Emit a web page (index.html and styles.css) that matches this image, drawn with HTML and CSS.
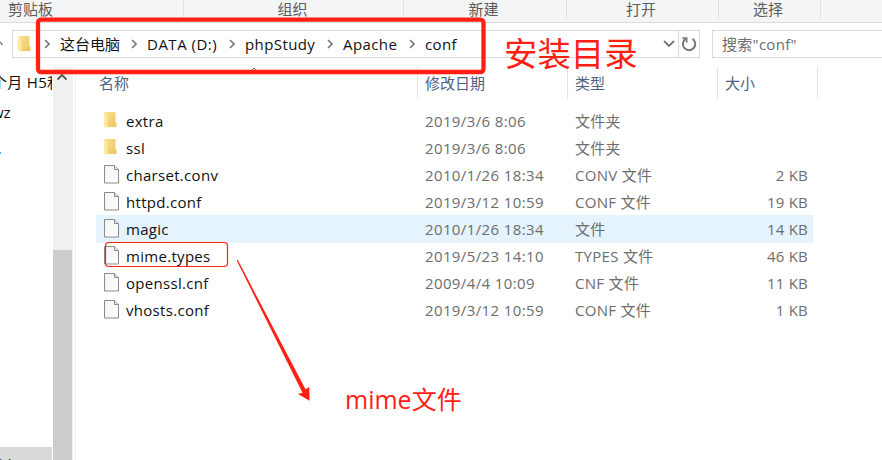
FILE: index.html
```html
<!DOCTYPE html>
<html lang="zh-CN">
<head>
<meta charset="utf-8">
<title>conf</title>
<link rel="stylesheet" href="styles.css">
</head>
<body>
<svg width="0" height="0" class="defs">
  <defs>
    <linearGradient id="gold" x1="0" y1="0" x2="1" y2="1"><stop offset="0" stop-color="#fde08a"/><stop offset="1" stop-color="#ecc563"/></linearGradient>
    <linearGradient id="paper" x1="0" y1="0" x2="1" y2="1"><stop offset="0" stop-color="#f3f4f4"/><stop offset="1" stop-color="#fdfdfd"/></linearGradient>
    <symbol id="folder" viewBox="0 0 14 18"><path d="M1 1h10.500v10l1 1v4H2z" fill="url(#gold)"/><path d="M0 1l4 2.500v11l-1 3-3-2z" fill="#ffe8a2"/><path d="M4 3.500v11" stroke="#edcf80" stroke-width=".6"/></symbol>
    <symbol id="file" viewBox="0 0 15 19"><path d="M.5.5h10l4 4v13.500H.5z" fill="url(#paper)" stroke="#8b8b8b"/><path d="M10.500.5v4h4" fill="#e4e4e4" stroke="#8b8b8b"/></symbol>
    <symbol id="chev" viewBox="0 0 6 10"><path d="M1 1l4 4-4 4" fill="none" stroke="#777" stroke-width="1.6"/></symbol>
  </defs>
</svg>
<div class="window">
  <header class="ribbon">
    <div class="group clipboard">剪贴板</div><div class="group organize">组织</div><div class="group create">新建</div><div class="group open">打开</div><div class="group select">选择</div>
  </header>
  <div class="toolbar">
    <svg class="up" viewBox="0 0 4 6"><path d="M0 1l2.500 3" fill="none" stroke="#777" stroke-width="1.3"/></svg>
    <div class="address">
      <svg class="folder"><use href="#folder"/></svg>
      <svg class="chev"><use href="#chev"/></svg><span class="crumb pc">这台电脑</span>
      <svg class="chev"><use href="#chev"/></svg><span class="crumb drive">DATA (D:)</span>
      <svg class="chev"><use href="#chev"/></svg><span class="crumb study">phpStudy</span>
      <svg class="chev"><use href="#chev"/></svg><span class="crumb apache">Apache</span>
      <svg class="chev"><use href="#chev"/></svg><span class="crumb">conf</span>
      <svg class="drop" viewBox="0 0 12 8"><path d="M1 1l5 5 5-5" fill="none" stroke="#777" stroke-width="1.8"/></svg>
      <div class="refresh"><svg width="16" height="16" viewBox="0 0 16 16"><path d="M11.500 2.800A6.200 6.200 0 1 1 4.500 2.900" fill="none" stroke="#777" stroke-width="2"/><path d="M1.200 2h4.400v4.400" fill="none" stroke="#777" stroke-width="1.7"/></svg></div>
    </div>
    <div class="search">搜索"conf"</div>
  </div>
  <main class="content">
    <nav class="nav">
      <div class="nav-item month">个月 H5和</div>
      <div class="nav-item wz">wz</div>
      <div class="dot"></div>
      <div class="nav-item current">(D:)</div>
    </nav>
    <div class="scroll"><svg width="12" height="8" viewBox="0 0 12 8"><path d="M1.500 6.500L6 2l4.500 4.500" fill="none" stroke="#555" stroke-width="1.8"/></svg><div class="thumb"></div></div>
    <section class="list">
      <div class="heads"><div class="head">名称<svg class="sort" viewBox="0 0 6 4"><path d="M.5 3.500L3 1l2.500 2.500" fill="none" stroke="#666"/></svg></div><div class="head">修改日期</div><div class="head">类型</div><div class="head">大小</div></div>
      <div class="rows">
        <div class="row"><svg class="folder"><use href="#folder"/></svg><span class="name">extra</span><span class="date">2019/3/6 8:06</span><span class="type">文件夹</span><span class="size"></span></div>
        <div class="row"><svg class="folder"><use href="#folder"/></svg><span class="name">ssl</span><span class="date">2019/3/6 8:06</span><span class="type">文件夹</span><span class="size"></span></div>
        <div class="row"><svg class="file"><use href="#file"/></svg><span class="name">charset.conv</span><span class="date">2010/1/26 18:34</span><span class="type">CONV 文件</span><span class="size">2 KB</span></div>
        <div class="row"><svg class="file"><use href="#file"/></svg><span class="name">httpd.conf</span><span class="date">2019/3/12 10:59</span><span class="type">CONF 文件</span><span class="size">19 KB</span></div>
        <div class="row hover"><svg class="file"><use href="#file"/></svg><span class="name">magic</span><span class="date">2010/1/26 18:34</span><span class="type">文件</span><span class="size">14 KB</span></div>
        <div class="row"><svg class="file"><use href="#file"/></svg><span class="name">mime.types</span><span class="date">2019/5/23 14:10</span><span class="type">TYPES 文件</span><span class="size">46 KB</span></div>
        <div class="row"><svg class="file"><use href="#file"/></svg><span class="name">openssl.cnf</span><span class="date">2009/4/4 10:09</span><span class="type">CNF 文件</span><span class="size">11 KB</span></div>
        <div class="row"><svg class="file"><use href="#file"/></svg><span class="name">vhosts.conf</span><span class="date">2019/3/12 10:59</span><span class="type">CONF 文件</span><span class="size">1 KB</span></div>
      </div>
    </section>
  </main>
  <svg class="marks" width="882" height="460" viewBox="0 0 882 460">
    <rect x="38" y="19.700" width="445.500" height="52.300" rx="3" fill="none" stroke="#ff2013" stroke-width="4.300"/>
    <rect x="105.500" y="242.500" width="122" height="24" rx="3.500" fill="none" stroke="#ff2013" stroke-width="1.200"/>
    <path d="M236.700 260.500l1-.7 67.800 129.500 3.800-2.300.2 13.700-11.500-6.700 4.500-1.300z" fill="#ff2013"/>
  </svg>
  <div class="note install">安装目录</div>
  <div class="note mime">mime文件</div>
</div>
</body>
</html>
```
FILE: styles.css
```css
* { box-sizing: border-box; }
body { margin: 0; background: #fff; font: 15px/20px "Open Sans", "Noto Sans CJK SC", sans-serif; color: #111; }
.defs { position: absolute; }
.window { position: relative; width: 882px; height: 460px; overflow: hidden; background: #fff; }
.ribbon { display: flex; height: 23px; background: #f4f5f7; border-bottom: 1px solid #d9dadb; color: #5c5c5c; }
.group { height: 19px; line-height: 19px; border-right: 1px solid #dfe0e1; text-align: center; white-space: nowrap; }
.clipboard { width: 184px; padding-right: 122px; }
.organize { width: 220px; padding-right: 2px; }
.create { width: 163px; padding-right: 3px; }
.open { width: 152px; padding-right: 3px; }
.select { width: 102px; padding-right: 3px; }
.toolbar { display: flex; height: 44px; padding-top: 7px; }
.up { flex: none; width: 4px; height: 6px; margin: 11px 8px 0 0; }
.address { display: flex; flex: none; align-items: center; width: 688px; height: 28px; border: 1px solid #d9d9d9; }
.folder { width: 14px; height: 18px; flex: none; }
.address .folder { margin: 0 12px 0 5px; }
.chev { width: 6px; height: 10px; flex: none; margin-right: 10px; }
.crumb { white-space: nowrap; flex: none; }
.pc { width: 71px; }
.drive { width: 82px; letter-spacing: .5px; }
.study { width: 82px; letter-spacing: .4px; }
.apache { width: 66px; letter-spacing: .4px; }
.crumb:nth-last-child(3) { letter-spacing: .4px; }
.drop { width: 12px; height: 8px; margin-left: auto; margin-right: 3px; }
.refresh { display: flex; align-items: center; justify-content: center; width: 21px; height: 26px; border-left: 1px solid #d9d9d9; }
.search { flex: none; width: 180px; height: 28px; margin-left: 12px; padding-left: 9px; border: 1px solid #d9d9d9; line-height: 27px; color: #6d6d6d; letter-spacing: .3px; }
.content { display: flex; height: 393px; }
.nav { display: flex; flex-direction: column; width: 53px; overflow: hidden; }
.nav-item { flex: none; white-space: nowrap; }
.month { width: 52px; overflow: hidden; margin-top: 5px; text-indent: -8px; letter-spacing: .3px; }
.wz { margin-top: 10px; text-indent: -8px; }
.dot { width: 1px; height: 2px; margin-top: 30px; background: #43b5f1; }
.current { width: 52px; height: 13px; margin-top: auto; padding-top: 6px; overflow: hidden; background: #d9d9d9; text-indent: -11px; }
.scroll { display: flex; flex-direction: column; width: 20px; background: #f0f0f0; }
.scroll svg { margin: 6px 0 0 3px; }
.thumb { width: 19px; height: 210px; margin-top: auto; background: #cdcdcd; }
.list { width: 807px; margin-left: 2px; border-left: 1px solid #f3f3f3; }
.heads { display: grid; grid-template-columns: 342px 150px 150px 100px; height: 32px; }
.head { position: relative; padding-left: 7px; border-right: 1px solid #e3e3e3; line-height: 32px; color: #4f6182; }
.head:first-child { padding-left: 23px; }
.sort { position: absolute; left: 175px; top: 0; width: 6px; height: 4px; }
.rows { padding: 8px 0 0 20px; }
.row { display: flex; width: 717px; height: 27px; line-height: 28px; padding-left: 8px; white-space: nowrap; }
.hover { height: 28px; margin-bottom: -1px; background: #e5f3ff; }
.row .folder { margin: 4px 8px 0 0; }
.file { width: 15px; height: 19px; flex: none; margin: 4px 7px 0 0; }
.name { width: 299px; letter-spacing: .3px; }
.date { width: 150px; color: #6d6d6d; letter-spacing: .38px; }
.type { width: 140px; color: #6d6d6d; letter-spacing: .3px; }
.size { width: 93px; text-align: right; color: #6d6d6d; }
.row .size { letter-spacing: .2px; }
.marks { position: absolute; left: 0; top: 0; }
.note { position: absolute; color: #ff2013; white-space: nowrap; }
.install { left: 504px; top: 31px; font-size: 33.4px; line-height: 44px; }
.mime { left: 345px; top: 383px; font-size: 25px; line-height: 32px; }
```
